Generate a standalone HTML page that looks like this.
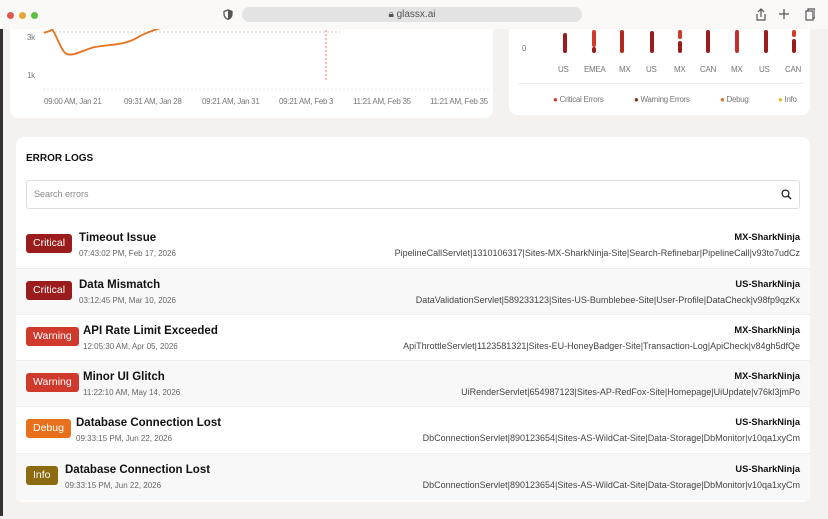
<!DOCTYPE html>
<html><head><meta charset="utf-8"><style>
*{box-sizing:border-box;margin:0;padding:0}
body{width:828px;height:519px;overflow:hidden;background:#f4f1ee;font-family:"Liberation Sans",sans-serif;position:relative;color:#111}
.lb{position:absolute;left:0;top:28px;width:3px;height:488px;background:#333}
.top{position:absolute;left:0;top:0;width:828px;height:29px;background:rgba(250,249,248,.97);z-index:5}
.dot{position:absolute;top:12px;width:7px;height:7px;border-radius:50%}
.url{position:absolute;left:242px;top:7px;width:340px;height:15px;border-radius:8px;background:#e3e3e3;font-size:10px;color:#555;text-align:center;line-height:15px}
.card{position:absolute;background:#fff;border-radius:8px}
.ax{position:absolute;font-size:8px;color:#777;letter-spacing:-.3px}
.row{position:absolute;left:16px;width:794px;height:46px;border-top:1px solid #eee}
.badge{position:absolute;left:10px;top:12px;height:19px;border-radius:3px;color:#fff;font-size:10.5px;line-height:19px;padding:0 7px}
.t{position:absolute;top:10px;font-size:11.5px;font-weight:bold;color:#111}
.d{position:absolute;top:27px;font-size:8px;color:#666}
.r1{position:absolute;right:10px;top:10px;font-size:9.3px;font-weight:bold;color:#111}
.r2{position:absolute;right:10px;top:26px;font-size:9px;color:#444}
.bar{position:absolute;width:4px;border-radius:2px}
</style></head><body>
<div class="lb"></div>
<div class="top">
<div class="dot" style="left:7px;background:#e0574c"></div>
<div class="dot" style="left:19px;background:#e5a832"></div>
<div class="dot" style="left:31px;background:#5fbf45"></div>
<svg style="position:absolute;left:223px;top:9px" width="10" height="11" viewBox="0 0 10 11"><path d="M5 1L1 2.5V5c0 3 2 4.5 4 5.5c2-1 4-2.5 4-5.5V2.5Z" fill="none" stroke="#555" stroke-width="1.3"/><path d="M5 1v9.5c2-1 4-2.5 4-5.5V2.5Z" fill="#555"/></svg>
<div class="url">🔒︎ glassx.ai</div>
<svg style="position:absolute;left:755px;top:7px" width="60" height="14"><path d="M6 2v8M3 5l3-3 3 3M2 7v6h8V7" fill="none" stroke="#555" stroke-width="1.2"/><path d="M29 2v10M24 7h10" stroke="#555" stroke-width="1.3"/><rect x="51" y="4" width="7" height="9" fill="none" stroke="#555" stroke-width="1.2"/><path d="M53 4V2h7v9h-2" fill="none" stroke="#555" stroke-width="1.2"/></svg>
</div>

<div class="card" style="left:10px;top:20px;width:483px;height:98px"></div>
<div class="ax" style="left:27px;top:33px">3k</div>
<div class="ax" style="left:27px;top:71px">1k</div>
<svg style="position:absolute;left:40px;top:20px" width="450" height="70">
<path d="M3 12H300" stroke="#bbb" stroke-dasharray="2 2" stroke-width=".7"/>
<path d="M3 69H450" stroke="#e5e5e5" stroke-dasharray="2 2" stroke-width=".7"/>
<path d="M286 10V60" stroke="#e8553a" stroke-dasharray="2 2" stroke-width=".8"/>
<path d="M4 13C8 11 10 12 12 9C16 14 20 28 25 33C32 38 42 30 55 27C70 24 85 26 100 16C108 12 118 8 130 6" fill="none" stroke="#e8701c" stroke-width="1.8"/>
</svg>
<div class="ax" style="left:44px;top:97px">09:00 AM, Jan 21</div>
<div class="ax" style="left:124px;top:97px">09:31 AM, Jan 28</div>
<div class="ax" style="left:202px;top:97px">09:21 AM, Jan 31</div>
<div class="ax" style="left:279px;top:97px">09:21 AM, Feb 3</div>
<div class="ax" style="left:353px;top:97px">11:21 AM, Feb 35</div>
<div class="ax" style="left:430px;top:97px">11:21 AM, Feb 35</div>

<div class="card" style="left:509px;top:20px;width:301px;height:95px"></div>
<div class="ax" style="left:522px;top:44px">0</div>
<div class="bar" style="left:563px;top:33px;height:20px;background:#9b1c1c"></div>
<div class="bar" style="left:592px;top:30px;height:17px;background:#d13a2a"></div><div class="bar" style="left:592px;top:47px;height:6px;background:#9b1c1c"></div>
<div class="bar" style="left:620px;top:30px;height:23px;background:#b02a1f"></div>
<div class="bar" style="left:650px;top:31px;height:22px;background:#9b1c1c"></div>
<div class="bar" style="left:678px;top:30px;height:9px;background:#d13a2a"></div><div class="bar" style="left:678px;top:41px;height:12px;background:#9b1c1c"></div>
<div class="bar" style="left:706px;top:30px;height:23px;background:#9b1c1c"></div>
<div class="bar" style="left:735px;top:30px;height:23px;background:#c1302a"></div>
<div class="bar" style="left:764px;top:30px;height:23px;background:#9b1c1c"></div>
<div class="bar" style="left:792px;top:30px;height:7px;background:#d13a2a"></div><div class="bar" style="left:792px;top:39px;height:14px;background:#9b1c1c"></div>
<div class="ax" style="left:558px;top:65px">US</div>
<div class="ax" style="left:584px;top:65px">EMEA</div>
<div class="ax" style="left:619px;top:65px">MX</div>
<div class="ax" style="left:646px;top:65px">US</div>
<div class="ax" style="left:674px;top:65px">MX</div>
<div class="ax" style="left:700px;top:65px">CAN</div>
<div class="ax" style="left:731px;top:65px">MX</div>
<div class="ax" style="left:759px;top:65px">US</div>
<div class="ax" style="left:785px;top:65px">CAN</div>
<div style="position:absolute;left:518px;top:83px;width:286px;border-top:1px solid #eee"></div>
<div class="ax" style="left:553px;top:95px"><span style="color:#d13a2a">●</span> Critical Errors</div>
<div class="ax" style="left:634px;top:95px"><span style="color:#7a3a10">●</span> Warning Errors</div>
<div class="ax" style="left:720px;top:95px"><span style="color:#e8701c">●</span> Debug</div>
<div class="ax" style="left:778px;top:95px"><span style="color:#e8b820">●</span> Info</div>

<div class="card" style="left:16px;top:137px;width:794px;height:365px"></div>
<div style="position:absolute;left:26px;top:153px;font-size:10px;font-weight:bold">ERROR LOGS</div>
<div style="position:absolute;left:26px;top:180px;width:774px;height:29px;border:1px solid #ddd;border-radius:3px;font-size:9px;color:#888;line-height:27px;padding-left:7px">Search errors</div>
<svg style="position:absolute;left:781px;top:189px" width="11" height="11"><circle cx="4.5" cy="4.5" r="3.4" fill="none" stroke="#222" stroke-width="1.3"/><path d="M7 7l3 3" stroke="#222" stroke-width="1.5"/></svg>

<div class="row" style="top:222px;background:#fff;border-top:none"><div class="badge" style="background:#9b1c1c">Critical</div><div class="t" style="left:63px">Timeout Issue</div><div class="d" style="left:63px">07:43:02 PM, Feb 17, 2026</div><div class="r1">MX-SharkNinja</div><div class="r2">PipelineCallServlet|1310106317|Sites-MX-SharkNinja-Site|Search-Refinebar|PipelineCall|v93to7udCz</div></div>
<div class="row" style="top:268px;background:#f8f8f8"><div class="badge" style="background:#9b1c1c">Critical</div><div class="t" style="left:63px">Data Mismatch</div><div class="d" style="left:63px">03:12:45 PM, Mar 10, 2026</div><div class="r1">US-SharkNinja</div><div class="r2">DataValidationServlet|589233123|Sites-US-Bumblebee-Site|User-Profile|DataCheck|v98fp9qzKx</div></div>
<div class="row" style="top:314px;background:#fff"><div class="badge" style="background:#cf3a2d">Warning</div><div class="t" style="left:67px">API Rate Limit Exceeded</div><div class="d" style="left:67px">12:05:30 AM, Apr 05, 2026</div><div class="r1">MX-SharkNinja</div><div class="r2">ApiThrottleServlet|1123581321|Sites-EU-HoneyBadger-Site|Transaction-Log|ApiCheck|v84gh5dfQe</div></div>
<div class="row" style="top:360px;background:#f8f8f8"><div class="badge" style="background:#cf3a2d">Warning</div><div class="t" style="left:67px">Minor UI Glitch</div><div class="d" style="left:67px">11:22:10 AM, May 14, 2026</div><div class="r1">MX-SharkNinja</div><div class="r2">UiRenderServlet|654987123|Sites-AP-RedFox-Site|Homepage|UiUpdate|v76kl3jmPo</div></div>
<div class="row" style="top:406px;background:#fff"><div class="badge" style="background:#e8701c">Debug</div><div class="t" style="left:60px">Database Connection Lost</div><div class="d" style="left:60px">09:33:15 PM, Jun 22, 2026</div><div class="r1">US-SharkNinja</div><div class="r2">DbConnectionServlet|890123654|Sites-AS-WildCat-Site|Data-Storage|DbMonitor|v10qa1xyCm</div></div>
<div class="row" style="top:453px;height:47px;background:#f8f8f8"><div class="badge" style="background:#8c6a10">Info</div><div class="t" style="left:49px">Database Connection Lost</div><div class="d" style="left:49px">09:33:15 PM, Jun 22, 2026</div><div class="r1">US-SharkNinja</div><div class="r2">DbConnectionServlet|890123654|Sites-AS-WildCat-Site|Data-Storage|DbMonitor|v10qa1xyCm</div></div>
</body></html>
